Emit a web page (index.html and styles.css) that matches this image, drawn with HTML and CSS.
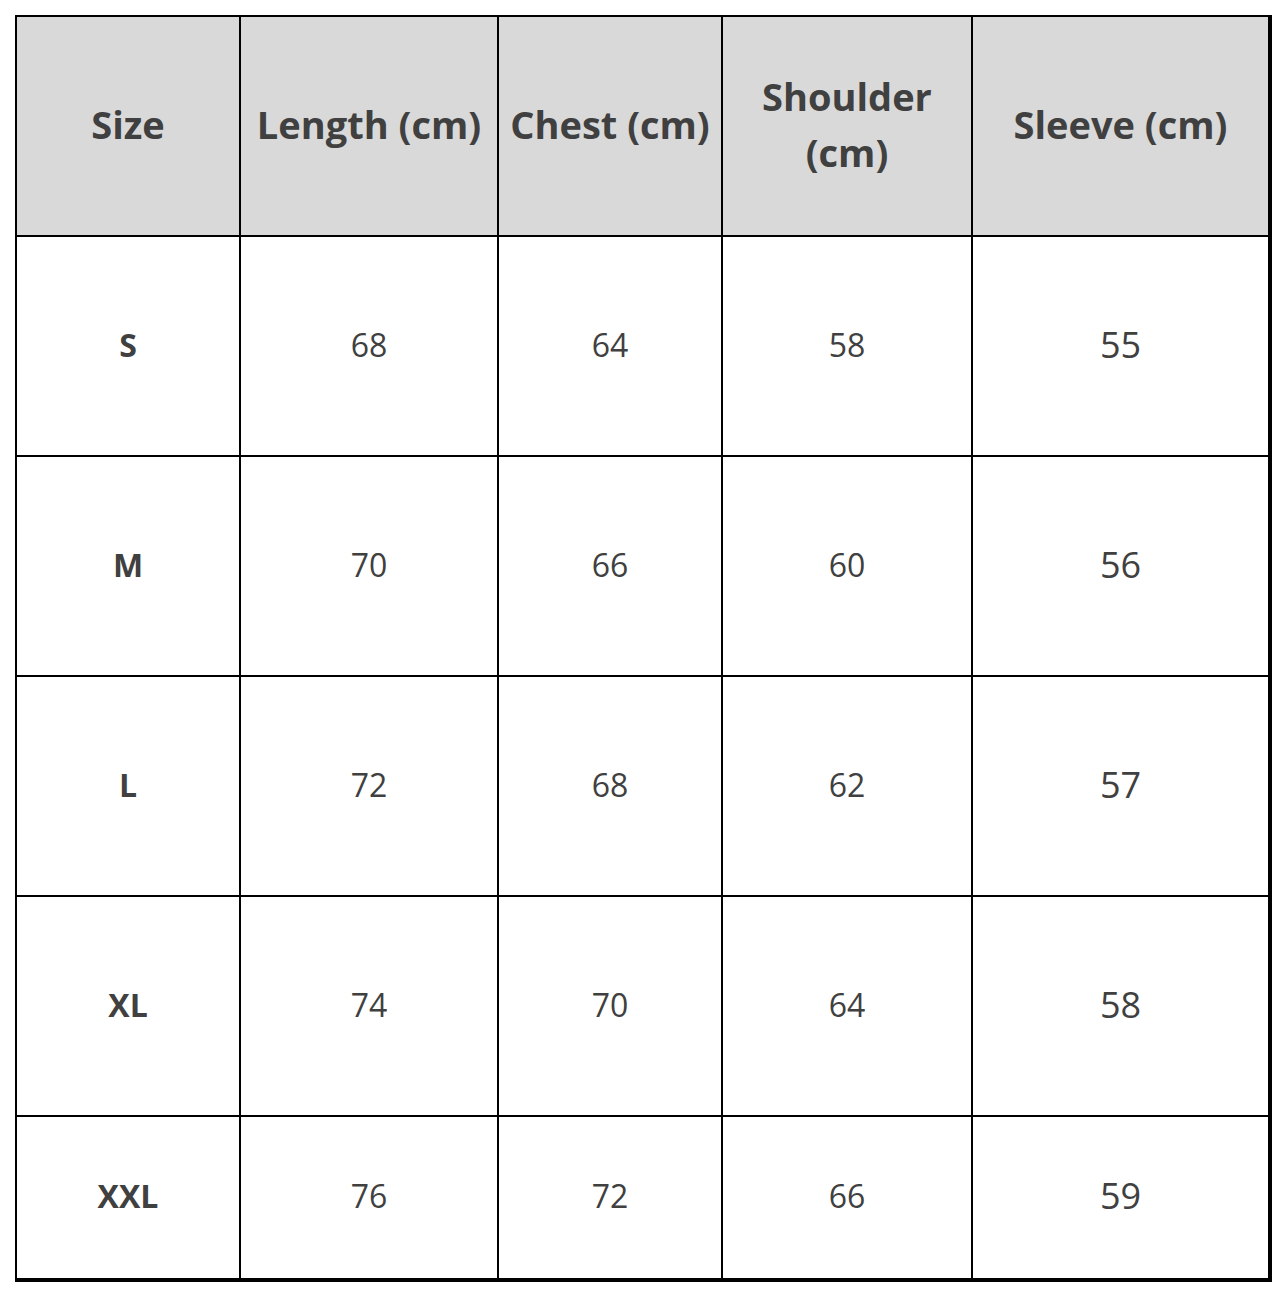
FILE: index.html
```html
<!DOCTYPE html>
<html>
<head>
<meta charset="utf-8">
<link rel="stylesheet" href="styles.css">
</head>
<body>
<table class="size-chart">
  <colgroup>
    <col class="c1"><col class="c2"><col class="c3"><col class="c4"><col class="c5">
  </colgroup>
  <thead>
    <tr class="head">
      <th>Size</th>
      <th>Length (cm)</th>
      <th>Chest (cm)</th>
      <th>Shoulder<br>(cm)</th>
      <th>Sleeve (cm)</th>
    </tr>
  </thead>
  <tbody>
    <tr class="row"><td class="size">S</td><td>68</td><td>64</td><td>58</td><td class="big">55</td></tr>
    <tr class="row"><td class="size">M</td><td>70</td><td>66</td><td>60</td><td class="big">56</td></tr>
    <tr class="row"><td class="size">L</td><td>72</td><td>68</td><td>62</td><td class="big">57</td></tr>
    <tr class="row"><td class="size">XL</td><td>74</td><td>70</td><td>64</td><td class="big">58</td></tr>
    <tr class="row last"><td class="size">XXL</td><td>76</td><td>72</td><td>66</td><td class="big">59</td></tr>
  </tbody>
</table>
</body>
</html>
```
FILE: styles.css
```css
html, body {
  margin: 0;
  padding: 0;
  background: #ffffff;
}
body {
  padding: 15px 0 0 15px;
  font-family: "Open Sans", "Noto Sans", sans-serif;
  color: #404040;
}
.size-chart {
  border-collapse: collapse;
  table-layout: fixed;
  width: 1255px;
  border-top: 2px solid #000;
  border-left: 2px solid #000;
  border-right: 4px solid #000;
  border-bottom: 4px solid #000;
}
.c1 { width: 224px; }
.c2 { width: 258px; }
.c3 { width: 224px; }
.c4 { width: 250px; }
.c5 { width: 298px; }
.size-chart th,
.size-chart td {
  border: 2px solid #000;
  text-align: center;
  vertical-align: middle;
  padding: 0 0 4px 0;
}
.size-chart th:first-child,
.size-chart td:first-child {
  border-left: 2px solid #000;
}
.size-chart th:last-child,
.size-chart td:last-child {
  border-right: 4px solid #000;
}
.size-chart tr.last td {
  border-bottom: 4px solid #000;
}
.head th {
  background: #d9d9d9;
  height: 214px;
  font-size: 38px;
  font-weight: 700;
  line-height: 56px;
  color: #404040;
}
.row td {
  height: 214px;
  font-size: 32px;
  font-weight: 400;
}
.row.last td {
  height: 157px;
}
.row td.size {
  font-weight: 700;
  font-size: 32px;
}
.row td.big {
  font-size: 36px;
}
```
